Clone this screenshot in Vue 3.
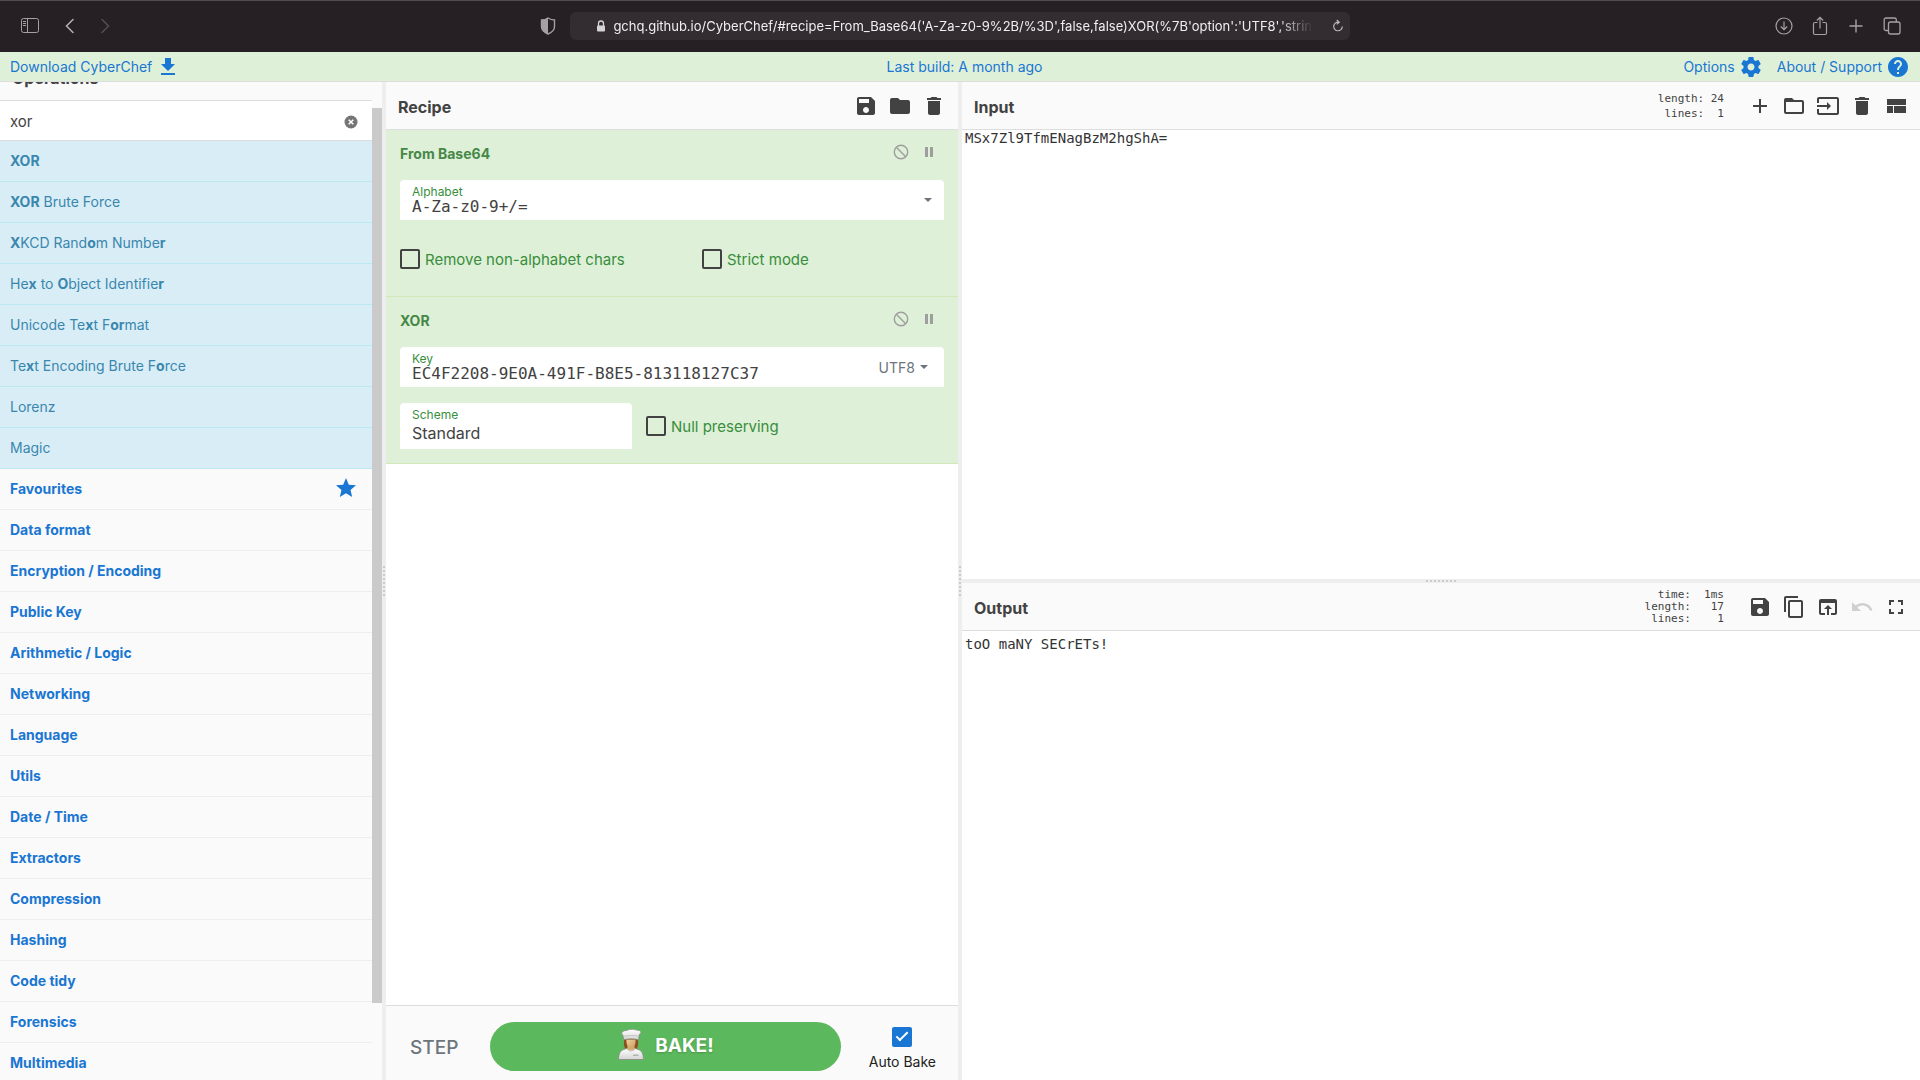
<script setup>
import { ref, onMounted } from 'vue'

const url = ref("gchq.github.io/CyberChef/#recipe=From_Base64('A-Za-z0-9%2B/%3D',false,false)XOR(%7B'option':'UTF8','string':'EC4F")
const search = ref('xor')
const alphabet = ref('A-Za-z0-9+/=')
const xorKey = ref('EC4F2208-9E0A-491F-B8E5-813118127C37')
const scheme = ref('Standard')
const removeChars = ref(false)
const strictMode = ref(false)
const nullPreserving = ref(false)
const autoBake = ref(true)
const inputText = ref('MSx7Zl9TfmENagBzM2hgShA=')
const outputText = ref('toO maNY SECrETs!')
const opsList = ref(null)
const thumb = ref({ top: '0%', height: '0%' })

// matched letters are wrapped in [ ]
const results = [
  '[XOR]',
  '[XOR] Brute Force',
  '[X]KCD Rand[o]m Numbe[r]',
  'He[x] to [O]bject Identifie[r]',
  'Unicode Te[x]t F[or]mat',
  'Te[x]t Encoding Brute F[o]rce',
  'Lorenz',
  'Magic'
]

const categories = [
  'Favourites', 'Data format', 'Encryption / Encoding', 'Public Key',
  'Arithmetic / Logic', 'Networking', 'Language', 'Utils', 'Date / Time',
  'Extractors', 'Compression', 'Hashing', 'Code tidy', 'Forensics',
  'Multimedia', 'Other', 'Flow control'
]

// material icon paths, 24x24
const icons = {
  save: 'M17 3H5c-1.11 0-2 .9-2 2v14c0 1.1.89 2 2 2h14c1.1 0 2-.9 2-2V7l-4-4zm-5 16c-1.66 0-3-1.34-3-3s1.34-3 3-3 3 1.34 3 3-1.34 3-3 3zm3-10H5V5h10v4z',
  folder: 'M10 4H4c-1.1 0-1.99.9-1.99 2L2 18c0 1.1.9 2 2 2h16c1.1 0 2-.9 2-2V8c0-1.1-.9-2-2-2h-8l-2-2z',
  trash: 'M6 19c0 1.1.9 2 2 2h8c1.1 0 2-.9 2-2V7H6v12zM19 4h-3.5l-1-1h-5l-1 1H5v2h14V4z',
  add: 'M19 13h-6v6h-2v-6H5v-2h6V5h2v6h6v2z',
  openFolder: 'M20 6h-8l-2-2H4c-1.1 0-1.99.9-1.99 2L2 18c0 1.1.9 2 2 2h16c1.1 0 2-.9 2-2V8c0-1.1-.9-2-2-2zm0 12H4V8h16v10z',
  input: 'M21 3.01H3c-1.1 0-2 .9-2 2V9h2V4.99h18v14.03H3V15H1v4.01c0 1.1.9 1.98 2 1.98h18c1.1 0 2-.88 2-1.98v-14c0-1.11-.9-2-2-2zM11 16l4-4-4-4v3H1v2h10v3z',
  layout: 'M3 5h19v6H3zM3 12h6v7H3zM10 12h12v7H10z',
  copy: 'M16 1H4c-1.1 0-2 .9-2 2v14h2V3h12V1zm3 4H8c-1.1 0-2 .9-2 2v14c0 1.1.9 2 2 2h11c1.1 0 2-.9 2-2V7c0-1.1-.9-2-2-2zm0 16H8V7h11v14z',
  replace: 'M19 4H5c-1.11 0-2 .9-2 2v12c0 1.1.89 2 2 2h4v-2H5V8h14v10h-4v2h4c1.1 0 2-.9 2-2V6c0-1.1-.89-2-2-2zm-7 6l-4 4h3v6h2v-6h3l-4-4z',
  undo: 'M12.5 8c-2.65 0-5.05.99-6.9 2.6L2 7v9h9l-3.62-3.62c1.39-1.16 3.16-1.88 5.12-1.88 3.54 0 6.55 2.31 7.6 5.5l2.37-.78C21.08 11.03 17.15 8 12.5 8z',
  fullscreen: 'M7 14H5v5h5v-2H7v-3zm-2-4h2V7h3V5H5v5zm12 7h-3v2h5v-5h-2v3zM14 5v2h3v3h2V5h-5z',
  settings: 'M19.43 12.98c.04-.32.07-.64.07-.98s-.03-.66-.07-.98l2.11-1.65c.19-.15.24-.42.12-.64l-2-3.46c-.12-.22-.39-.3-.61-.22l-2.49 1c-.52-.4-1.08-.73-1.69-.98l-.38-2.65C14.46 2.18 14.25 2 14 2h-4c-.25 0-.46.18-.49.42l-.38 2.65c-.61.25-1.17.59-1.69.98l-2.49-1c-.23-.09-.49 0-.61.22l-2 3.46c-.13.22-.07.49.12.64l2.11 1.65c-.04.32-.07.65-.07.98s.03.66.07.98l-2.11 1.65c-.19.15-.24.42-.12.64l2 3.46c.12.22.39.3.61.22l2.49-1c.52.4 1.08.73 1.69.98l.38 2.65c.03.24.24.42.49.42h4c.25 0 .46-.18.49-.42l.38-2.65c.61-.25 1.17-.59 1.69-.98l2.49 1c.23.09.49 0 .61-.22l2-3.46c.12-.22.07-.49-.12-.64l-2.11-1.65zM12 15.5c-1.93 0-3.5-1.57-3.5-3.5s1.57-3.5 3.5-3.5 3.5 1.57 3.5 3.5-1.57 3.5-3.5 3.5z',
  help: 'M12 2C6.48 2 2 6.48 2 12s4.48 10 10 10 10-4.48 10-10S17.52 2 12 2zm1 17h-2v-2h2v2zm2.07-7.75l-.9.92C13.45 12.9 13 13.5 13 15h-2v-.5c0-1.1.45-2.1 1.17-2.83l1.24-1.26c.37-.36.59-.86.59-1.41 0-1.1-.9-2-2-2s-2 .9-2 2H8c0-2.21 1.79-4 4-4s4 1.79 4 4c0 .88-.36 1.68-.93 2.25z',
  download: 'M19 9h-4V3H9v6H5l7 7 7-7zM5 18v2h14v-2H5z',
  star: 'M12 17.27L18.18 21l-1.64-7.03L22 9.24l-7.19-.61L12 2 9.19 8.63 2 9.24l5.46 4.73L5.82 21z'
}

const recipeTools = [['Save recipe', 'save'], ['Load recipe', 'folder'], ['Clear recipe', 'trash']]
const inputTools = [
  ['Add a new input tab', 'add'], ['Open folder as input', 'openFolder'], ['Open file as input', 'input'],
  ['Clear input and output', 'trash'], ['Reset pane layout', 'layout']
]
const outputTools = [
  ['Save output to file', 'save'], ['Copy output', 'copy'], ['Replace input with output', 'replace'],
  ['Undo', 'undo'], ['Maximise output pane', 'fullscreen']
]

function parts(text) {
  return text.split(/[[\]]/).map((value, i) => ({ value, hit: i % 2 === 1 }))
}

function updateThumb() {
  const el = opsList.value
  thumb.value = {
    top: (el.scrollTop / el.scrollHeight) * 100 + '%',
    height: (el.clientHeight / el.scrollHeight) * 100 + '%'
  }
}

onMounted(() => {
  opsList.value.scrollTop = 29
  updateThumb()
})
</script>

<template>
  <div class="app">
    <header class="browser">
      <div class="browser-side">
        <button class="chrome-btn" aria-label="Sidebar">
          <svg width="20" height="18" viewBox="0 0 20 18" fill="none" stroke="#a5a0a4"><rect x="1.5" y="1.5" width="17" height="14" rx="2" /><path d="M7.5 1.5v14M3 4.5h3M3 6.5h3M3 8.5h3" /></svg>
        </button>
        <button class="chrome-btn" aria-label="Back">
          <svg width="20" height="18" viewBox="0 0 20 18" fill="none" stroke="#b5b1b4" stroke-width="1.5" stroke-linecap="round"><path d="M13 2.5L6.5 9l6.5 6.5" /></svg>
        </button>
        <button class="chrome-btn" aria-label="Forward">
          <svg width="20" height="18" viewBox="0 0 20 18" fill="none" stroke="#544f53" stroke-width="1.5" stroke-linecap="round"><path d="M7 2.5L13.5 9 7 15.5" /></svg>
        </button>
      </div>
      <div class="address-wrap">
        <svg width="16" height="18" viewBox="0 0 16 18"><path d="M8 1C6 2.3 3.5 3 1.5 3v6.500C1.500 13 4.500 15.600 8 17c3.500-1.400 6.500-4 6.500-7.500V3C12.500 3 10 2.300 8 1z" fill="none" stroke="#a5a0a4" stroke-width="1.4" /><path d="M8 1C6 2.300 3.500 3 1.500 3v6.500C1.500 13 4.500 15.600 8 17z" fill="#a5a0a4" /></svg>
        <div class="address">
          <svg width="10" height="12" viewBox="0 0 10 12"><path d="M2.500 6V3.500a2.500 2.500 0 0 1 5 0V6" fill="none" stroke="#d6d3d5" stroke-width="1.3" /><rect x="1" y="5.5" width="8" height="6" rx="1" fill="#d6d3d5" /></svg>
          <input v-model="url" class="url" aria-label="Address" />
          <button class="chrome-btn" aria-label="Reload">
            <svg width="12" height="14" viewBox="0 0 12 14" fill="none" stroke="#bcb8bb" stroke-width="1.2"><path d="M6.500 3.200A4.300 4.300 0 1 0 10.300 7.500M4.800 1l2.400 2.200-2.400 2.200" /></svg>
          </button>
        </div>
      </div>
      <div class="browser-side browser-right">
        <button class="chrome-btn" aria-label="Downloads">
          <svg width="20" height="20" viewBox="0 0 20 20" fill="none" stroke="#a5a0a4" stroke-width="1.2"><circle cx="10" cy="10" r="8" /><path d="M10 5.500v8M6.800 10.500L10 13.700l3.200-3.200" /></svg>
        </button>
        <button class="chrome-btn" aria-label="Share">
          <svg width="20" height="20" viewBox="0 0 20 20" fill="none" stroke="#a5a0a4" stroke-width="1.2"><path d="M7.500 6.500H5a1.500 1.500 0 0 0-1.500 1.500v9A1.500 1.500 0 0 0 5 18.500h10a1.500 1.500 0 0 0 1.500-1.500V8A1.500 1.500 0 0 0 15 6.500h-2.500M10 12.500V1.500M6.800 4.500L10 1.300l3.200 3.200" /></svg>
        </button>
        <button class="chrome-btn" aria-label="New tab">
          <svg width="20" height="20" viewBox="0 0 20 20" fill="none" stroke="#a5a0a4" stroke-width="1.4"><path d="M10 3.500v13M3.500 10h13" /></svg>
        </button>
        <button class="chrome-btn" aria-label="Tab overview">
          <svg width="20" height="20" viewBox="0 0 20 20" fill="none" stroke="#a5a0a4" stroke-width="1.3"><rect x="6.500" y="6" width="11.500" height="12" rx="2" /><path d="M6.500 14.500H4a1.800 1.800 0 0 1-1.800-1.800V3.800A1.800 1.800 0 0 1 4 2h8.500a1.800 1.800 0 0 1 1.800 1.800V6" /></svg>
        </button>
      </div>
    </header>

    <nav class="banner">
      <a href="#download">Download CyberChef <svg class="icon" viewBox="0 0 24 24"><path :d="icons.download" /></svg></a>
      <a href="#build" class="build">Last build: A month ago</a>
      <div class="banner-right">
        <a href="#options">Options <svg class="icon" viewBox="0 0 24 24"><path :d="icons.settings" /></svg></a>
        <a href="#support">About / Support <svg class="icon" viewBox="0 0 24 24"><path :d="icons.help" /></svg></a>
      </div>
    </nav>

    <main class="workspace">
      <section class="operations">
        <div ref="opsList" class="ops-list" @scroll="updateThumb">
          <h2 class="title">Operations</h2>
          <div class="search">
            <input v-model="search" aria-label="Search operations" />
            <button aria-label="Clear search" @click="search = ''">
              <svg width="14" height="14" viewBox="0 0 14 14"><circle cx="7" cy="7" r="6.5" fill="#757575" /><path d="M4.700 4.700l4.600 4.600M9.300 4.700L4.700 9.300" stroke="#fff" stroke-width="1.5" /></svg>
            </button>
          </div>
          <ul class="results">
            <li v-for="op in results" :key="op">
              <template v-for="(p, i) in parts(op)" :key="i"><b v-if="p.hit">{{ p.value }}</b><template v-else>{{ p.value }}</template></template>
            </li>
          </ul>
          <button v-for="cat in categories" :key="cat" class="category">
            {{ cat }}
            <svg v-if="cat === 'Favourites'" class="icon" viewBox="0 0 24 24"><path :d="icons.star" /></svg>
          </button>
        </div>
        <div class="scrollbar">
          <div class="thumb" :style="thumb"></div>
        </div>
      </section>

      <div class="gutter"></div>

      <section class="recipe">
        <div class="title">
          <h2>Recipe</h2>
          <div class="tools">
            <button v-for="[label, name] in recipeTools" :key="name" :aria-label="label">
              <svg class="icon" viewBox="0 0 24 24"><path :d="icons[name]" /></svg>
            </button>
          </div>
        </div>

        <div class="rec-list">
          <article class="op">
            <div class="op-head">
              <h3>From Base64</h3>
              <button aria-label="Disable operation"><svg width="16" height="16" viewBox="0 0 16 16" fill="none" stroke="#9e9e9e" stroke-width="1.4"><circle cx="8" cy="8" r="6.7" /><path d="M3.300 3.300l9.400 9.400" /></svg></button>
              <button aria-label="Set breakpoint"><svg width="16" height="16" viewBox="0 0 16 16" fill="#9e9e9e"><path d="M4 3h3v10H4zM9 3h3v10H9z" /></svg></button>
            </div>
            <div class="field">
              <div class="field-main">
                <label for="alphabet">Alphabet</label>
                <input id="alphabet" v-model="alphabet" class="mono" />
              </div>
              <button class="drop" aria-label="Alphabet presets"><span class="caret"></span></button>
            </div>
            <div class="checks">
              <label class="check"><input v-model="removeChars" type="checkbox" />Remove non-alphabet chars</label>
              <label class="check"><input v-model="strictMode" type="checkbox" />Strict mode</label>
            </div>
          </article>

          <article class="op">
            <div class="op-head">
              <h3>XOR</h3>
              <button aria-label="Disable operation"><svg width="16" height="16" viewBox="0 0 16 16" fill="none" stroke="#9e9e9e" stroke-width="1.4"><circle cx="8" cy="8" r="6.7" /><path d="M3.300 3.300l9.400 9.400" /></svg></button>
              <button aria-label="Set breakpoint"><svg width="16" height="16" viewBox="0 0 16 16" fill="#9e9e9e"><path d="M4 3h3v10H4zM9 3h3v10H9z" /></svg></button>
            </div>
            <div class="field">
              <div class="field-main">
                <label for="key">Key</label>
                <input id="key" v-model="xorKey" class="mono" />
              </div>
              <button class="drop drop-text">UTF8<span class="caret"></span></button>
            </div>
            <div class="row">
              <div class="field scheme">
                <div class="field-main">
                  <label for="scheme">Scheme</label>
                  <select id="scheme" v-model="scheme">
                    <option>Standard</option>
                    <option>Input differential</option>
                    <option>Output differential</option>
                    <option>Cascade</option>
                  </select>
                </div>
              </div>
              <label class="check"><input v-model="nullPreserving" type="checkbox" />Null preserving</label>
            </div>
          </article>
        </div>

        <footer class="controls">
          <button class="step">STEP</button>
          <button class="bake">
            <svg width="28" height="32" viewBox="0 0 28 32">
              <defs>
                <linearGradient id="coat" x1="0" y1="0" x2="0" y2="1"><stop offset="0" stop-color="#fff" /><stop offset="1" stop-color="#d3d5d3" /></linearGradient>
                <linearGradient id="face" x1="0" y1="0" x2="1" y2="1"><stop offset="0" stop-color="#f0d3a0" /><stop offset="1" stop-color="#c99a5a" /></linearGradient>
              </defs>
              <path d="M7.500 9c-1 4-.9 8 .8 11h11.400c1.700-3 1.800-7 .8-11z" fill="#8a501f" />
              <path d="M1.500 30.500c.2-5.500 1.600-8.600 4.500-9.700l4.500-1.600h7l4.500 1.600c2.900 1.100 4.300 4.200 4.500 9.700z" fill="url(#coat)" stroke="#858b85" stroke-width=".8" />
              <path d="M10.500 17v3c0 2 7 2 7 0v-3z" fill="#d7ab6d" />
              <path d="M9.500 10.500c-.4 5 1.500 8.500 4.500 8.500s5-3.500 4.500-8.500z" fill="url(#face)" />
              <path d="M10 20.500l4 2 4-2" fill="none" stroke="#b9bdb9" stroke-width=".7" />
              <path d="M16 26.200h5.500" stroke="#999f99" stroke-width="1" />
              <path d="M6.800 10.800L5.900 6C3.500 4.500 5 1.600 9.500 1.500 13-.3 18 .3 20 1.200c4-.3 5.200 2.500 2.300 4.300l-.8 5.300c-4.500-1.300-10.200-1.300-14.700 0z" fill="url(#coat)" stroke="#858b85" stroke-width=".7" />
              <path d="M6.500 7.500c5-1.300 10.500-1.300 15.300-.2" fill="none" stroke="#b4b8b4" stroke-width=".7" />
            </svg>
            BAKE!
          </button>
          <label class="auto"><input v-model="autoBake" type="checkbox" />Auto Bake</label>
        </footer>
      </section>

      <div class="gutter"></div>

      <section class="io">
        <div class="pane">
          <div class="title">
            <h2>Input</h2>
            <pre class="stats stats-input">length: 24
 lines:  1</pre>
            <div class="tools">
              <button v-for="[label, name] in inputTools" :key="name" :aria-label="label">
                <svg class="icon" viewBox="0 0 24 24"><path :d="icons[name]" /></svg>
              </button>
            </div>
          </div>
          <textarea v-model="inputText" aria-label="Input" spellcheck="false"></textarea>
        </div>
        <div class="gutter gutter-row"></div>
        <div class="pane pane-output">
          <div class="title">
            <h2>Output</h2>
            <pre class="stats">  time:  1ms
length:   17
 lines:    1</pre>
            <div class="tools">
              <button v-for="[label, name] in outputTools" :key="name" :aria-label="label" :disabled="name === 'undo'">
                <svg class="icon" viewBox="0 0 24 24"><path :d="icons[name]" /></svg>
              </button>
            </div>
          </div>
          <textarea v-model="outputText" aria-label="Output" readonly spellcheck="false"></textarea>
        </div>
      </section>
    </main>
  </div>
</template>

<style>
html,
body,
#app {
  height: 100%;
}

body {
  overflow: hidden;
}
</style>

<style scoped>
.app {
  display: flex;
  flex-direction: column;
  height: 100vh;
  font-family: Inter, "Liberation Sans", sans-serif;
  font-size: 14px;
  color: #424242;
}

.app *,
.app *::before {
  box-sizing: border-box;
}

button,
input,
select,
textarea {
  margin: 0;
  padding: 0;
  border: 0;
  outline: 0;
  background: none;
  font: inherit;
  color: inherit;
}

h2,
h3,
ul,
pre {
  margin: 0;
  padding: 0;
}

svg {
  display: block;
  flex: none;
}

.icon {
  width: 24px;
  height: 24px;
  fill: currentColor;
}

/* browser bar */
.browser {
  display: flex;
  align-items: center;
  height: 52px;
  flex: none;
  padding: 0 18px 2px 20px;
  border-top: 1px solid #504d50;
  background: #262024;
}

.browser-side {
  display: flex;
  flex: 1;
  gap: 15px;
}

.browser-side .chrome-btn:first-child {
  margin-right: 5px;
}

.browser-right {
  justify-content: flex-end;
  gap: 16px;
}

.browser-right .chrome-btn:first-child {
  margin-right: 0;
}

.chrome-btn {
  display: flex;
}

.address-wrap {
  display: flex;
  align-items: center;
  gap: 14px;
  width: 43%;
  margin-right: 32px;
}

.address {
  display: flex;
  align-items: center;
  gap: 7px;
  flex: 1;
  height: 28px;
  padding: 0 6px 0 26px;
  border-radius: 6px;
  background: #332d31;
}

.url {
  flex: 1;
  min-width: 0;
  margin-right: 12px;
  font-size: 13px;
  color: #f0eef0;
  mask-image: linear-gradient(to right, #000 95%, transparent 100%);
}

/* banner */
.banner {
  display: grid;
  grid-template-columns: 1fr auto 1fr;
  align-items: center;
  height: 30px;
  flex: none;
  padding: 0 10px;
  border-bottom: 1px solid #ddd;
  background: #dff0d8;
}

.banner a {
  display: flex;
  align-items: center;
  gap: 4px;
  color: #1976d2;
  text-decoration: none;
}

.banner .build {
  padding-left: 9px;
}

.banner-right {
  display: flex;
  justify-content: flex-end;
  gap: 14px;
}

/* panes */
.workspace {
  display: flex;
  flex: 1;
  min-height: 0;
}

.gutter {
  display: flex;
  align-items: center;
  justify-content: center;
  flex: none;
  width: 4px;
  background: #eee;
}

.gutter::before {
  content: "";
  width: 2px;
  height: 30px;
  background: repeating-linear-gradient(to bottom, #ccc 0 2px, transparent 2px 4px);
}

.gutter-row {
  width: auto;
  height: 4px;
}

.gutter-row::before {
  width: 30px;
  height: 2px;
  background: repeating-linear-gradient(to right, #ccc 0 2px, transparent 2px 4px);
}

.title {
  display: flex;
  align-items: center;
  flex: none;
  height: 48px;
  padding: 0 12px;
  border-bottom: 1px solid #ddd;
  background: #fafafa;
  font-size: 16px;
  line-height: 26px;
  font-weight: 700;
}

.title h2 {
  flex: 1;
  padding-top: 2px;
  font-size: 16px;
}

/* operations */
.operations {
  display: flex;
  width: 382px;
  flex: none;
  background: #fafafa;
}

.ops-list {
  flex: 1;
  overflow-y: scroll;
  scrollbar-width: none;
}

.ops-list .title {
  padding-top: 2px;
}

.scrollbar {
  width: 10px;
}

.thumb {
  position: relative;
  background: #cacaca;
}

.tools {
  display: flex;
  gap: 10px;
}

.tools button:disabled {
  color: #d0d0d0;
}

.search {
  display: flex;
  align-items: center;
  height: 40px;
  padding: 2px 14px 0 10px;
  border-bottom: 1px solid #ddd;
  background: #fff;
}

.search input {
  flex: 1;
  min-width: 0;
  font-size: 15px;
}

.results {
  list-style: none;
}

.results li,
.category {
  display: flex;
  align-items: center;
  height: 41px;
  padding: 0 14px 2px 10px;
}

.results li {
  display: block;
  line-height: 40px;
  white-space: pre;
  color: #3a87ad;
  background: #d9edf7;
  border-bottom: 1px solid #bce8f1;
}

.category {
  justify-content: space-between;
  width: 100%;
  font-weight: 700;
  color: #1976d2;
  background: #fafafa;
  border-bottom: 1px solid #eee;
}

/* recipe */
.recipe {
  display: flex;
  flex-direction: column;
  flex: 572;
  min-width: 0;
  background: #fff;
}

.rec-list {
  flex: 1;
}

.op {
  padding: 14px;
  height: 167px;
  border-bottom: 1px solid #d0e9b9;
  background: #dff0d8;
  color: #388e3c;
}

.op-head {
  display: flex;
  gap: 12px;
  padding-right: 7px;
  margin-bottom: 14px;
  height: 22px;
}

.op-head h3 {
  flex: 1;
  font-size: 14px;
  line-height: 20px;
  font-weight: 700;
  color: #468847;
}

.op-head button {
  height: 16px;
}

.field {
  display: flex;
  height: 40px;
  border-radius: 4px 4px 0 0;
  background: #fff;
}

.field-main {
  display: flex;
  flex-direction: column;
  flex: 1;
  min-width: 0;
  padding: 5px 12px 0;
}

.field label {
  font-size: 12px;
  line-height: 13px;
}

.field input,
.field select {
  height: 18px;
  font-size: 16px;
  line-height: 18px;
  color: #424242;
}

.field select {
  appearance: none;
  height: 24px;
}

.mono,
.stats,
textarea {
  font-family: "DejaVu Sans Mono", "Liberation Mono", monospace;
}

.drop {
  display: flex;
  align-items: center;
  gap: 5px;
  padding: 0 12px;
  color: #6c757d;
}

.drop-text {
  padding-right: 16px;
}

.caret {
  border: 4px solid transparent;
  border-top-color: currentColor;
  border-bottom: 0;
}

.check {
  display: flex;
  align-items: center;
  gap: 5px;
  font-size: 15px;
}

.check input,
.auto input {
  appearance: none;
  width: 20px;
  height: 20px;
  border: 2px solid #424242;
  border-radius: 2px;
}

.check input:checked,
.auto input:checked {
  border-color: #1976d2;
  background: #1976d2;
}

.check input:checked::before,
.auto input:checked::before {
  content: "";
  display: block;
  width: 6px;
  height: 12px;
  margin: 0 auto;
  border: solid #fff;
  border-width: 0 2px 2px 0;
  transform: rotate(45deg);
}

.checks {
  display: grid;
  grid-template-columns: 302px 1fr;
  padding-top: 29px;
}

.row {
  display: flex;
  align-items: center;
  gap: 14px;
  padding-top: 16px;
}

.scheme {
  width: 232px;
  height: 46px;
}

.controls {
  display: flex;
  align-items: center;
  flex: none;
  height: 75px;
  padding: 6px 22px 0 24px;
  border-top: 1px solid #ddd;
  background: #fafafa;
}

.step {
  width: 80px;
  padding-top: 2px;
  text-align: left;
  font-size: 19px;
  font-weight: 500;
  color: #6c757d;
}

.bake {
  display: flex;
  align-items: center;
  justify-content: center;
  gap: 10px;
  flex: 1;
  height: 49px;
  margin-right: 28px;
  padding-bottom: 2px;
  border-radius: 25px;
  background: #5cb85c;
  font-size: 19px;
  font-weight: 700;
  color: #fff;
  text-shadow: 0 1px 2px rgba(0, 0, 0, 0.2);
}

.auto {
  display: flex;
  flex-direction: column;
  align-items: center;
  gap: 6px;
  padding-top: 4px;
  white-space: nowrap;
  line-height: 17px;
  color: #212121;
}

/* input and output */
.io {
  display: flex;
  flex-direction: column;
  flex: 958;
  min-width: 0;
}

.pane {
  display: flex;
  flex-direction: column;
  flex: 1;
  min-height: 0;
}

.stats {
  margin-right: 24px;
  font-size: 11px;
  font-weight: 400;
  line-height: 12px;
}

.stats-input {
  line-height: 15px;
}

textarea {
  display: block;
  flex: 1;
  width: 100%;
  resize: none;
  padding: 0 3px;
  font-size: 14px;
  line-height: 17px;
  color: #333;
  background: #fff;
}

.pane-output textarea {
  padding-top: 5px;
}
</style>
